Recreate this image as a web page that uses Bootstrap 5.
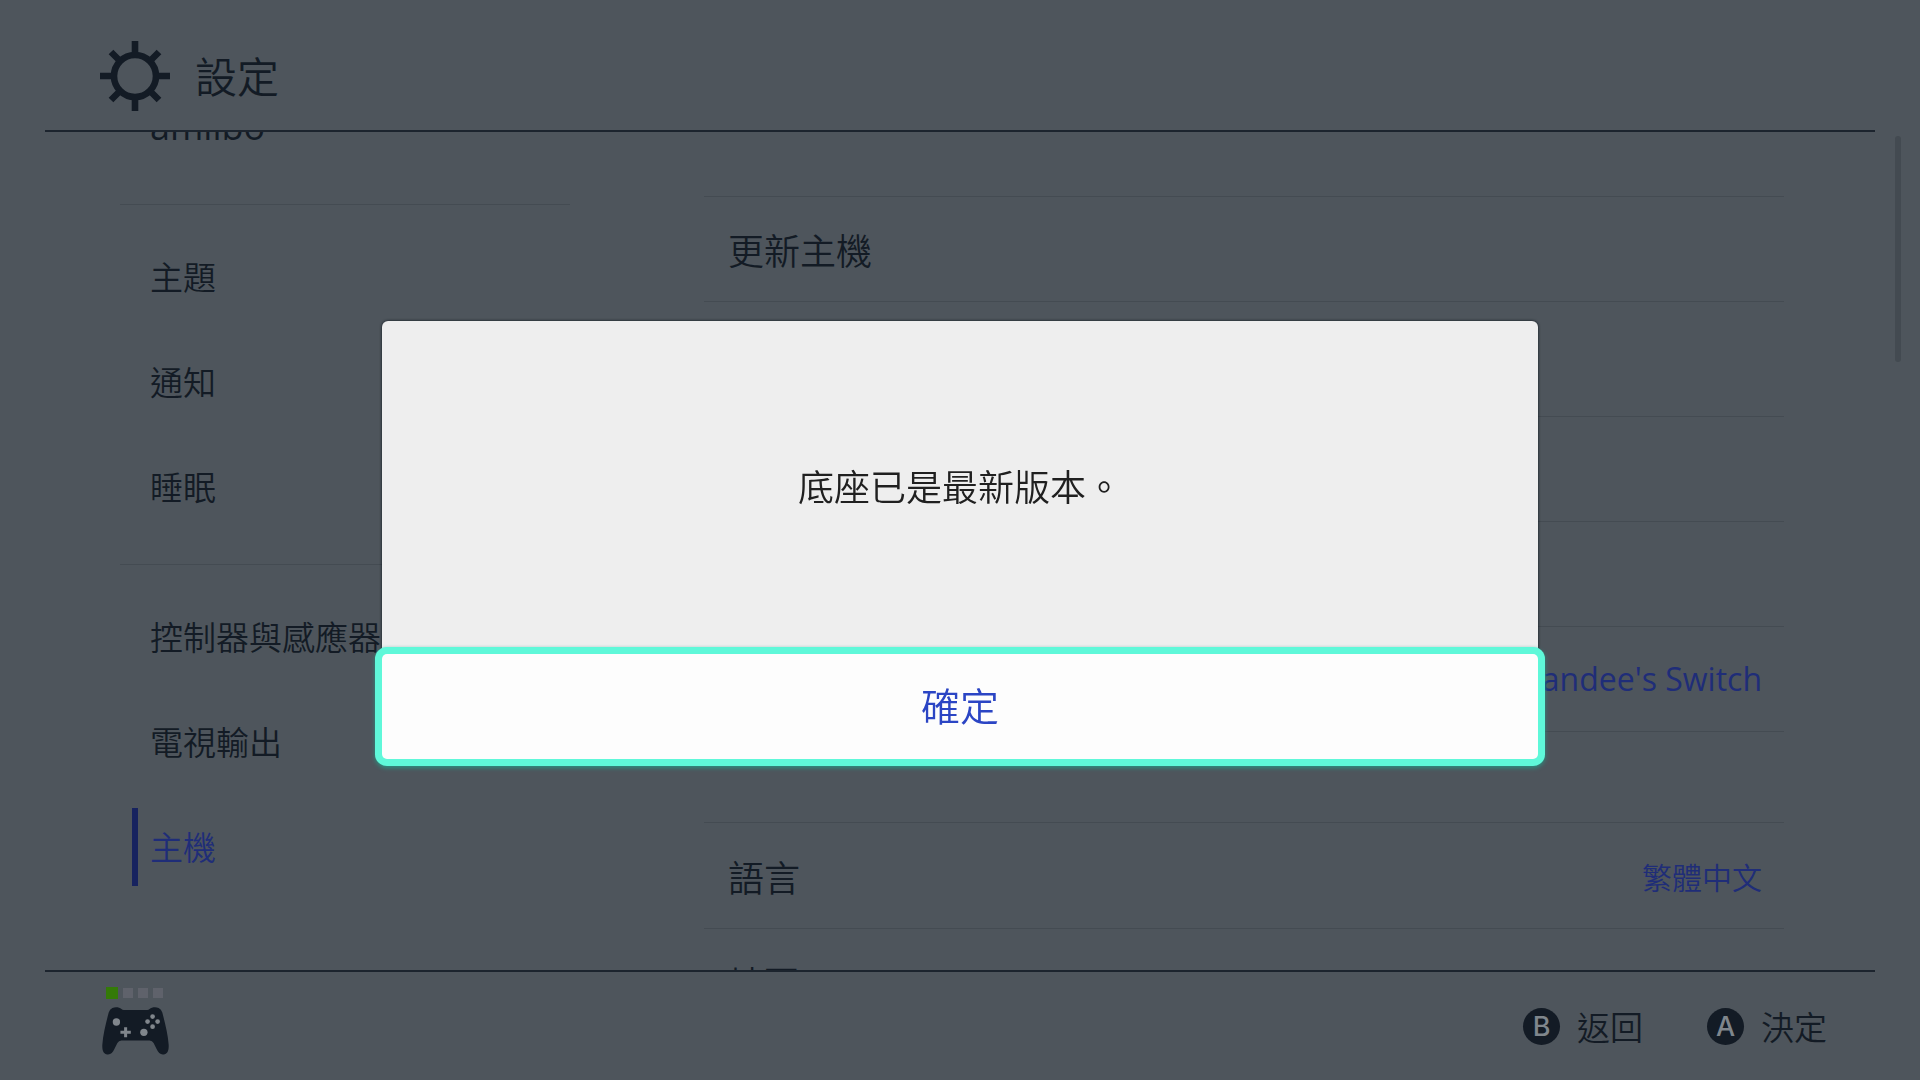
<!DOCTYPE html>
<html lang="zh-Hant">
<head>
<meta charset="utf-8">
<meta name="viewport" content="width=device-width, initial-scale=1">
<title>設定</title>
<link href="https://cdn.jsdelivr.net/npm/bootstrap@5.3.0/dist/css/bootstrap.min.css" rel="stylesheet">
<style>
  :root { --ink: #131b25; --dim: #4e555c; --rule: #444b52; --accent: #1f2d78; --focus: #5ff8d9; }
  body { background: var(--dim); color: var(--ink); font-family: "Noto Sans CJK TC", "Open Sans", sans-serif; font-weight: 350; line-height: 1; }
  .latin { font-family: "Open Sans", "Noto Sans CJK TC", sans-serif; font-weight: 400; }
  .screen-head { height: 132px; margin: 0 45px; padding: 22px 55px 0; border-bottom: 2px solid #1c242e; }
  .screen-title { font-size: 42px; font-weight: 350; line-height: 50px; margin: 0 0 2px 25px; }
  .screen-foot { height: 110px; margin: 0 45px; padding: 0 48px 0 57px; border-top: 2px solid #1c242e; }
  .side-menu { width: 620px; padding: 0 50px 0 120px; }
  /* list scrolled part of the way through its first entry */
  .side-scroll { margin-top: -58px; }
  .side-item { height: 105px; padding-left: 12px; font-size: 33px; color: var(--ink); text-decoration: none; white-space: nowrap; }
  .side-item.latin { font-size: 36px; }
  .side-item::before { content: ""; width: 6px; height: 78px; margin-right: 12px; }
  .side-item.active { color: var(--accent); }
  .side-item.active::before { background: #17235f; }
  .side-rule { margin: 25px 0 19px; border: 0; border-top: 1px solid var(--rule); opacity: 1; }
  .option-pane { padding: 64px 84px 0; }
  .option-group { border-top: 1px solid var(--rule); }
  .option-row { height: 105px; padding: 0 22px 0 24px; border: 0; border-bottom: 1px solid var(--rule); border-radius: 0; background: transparent; color: inherit; font-size: 36px; font-weight: 350; text-align: start; }
  .option-row.tall { height: 115px; }
  .option-group + .option-group { margin-top: 90px; }
  .option-group + .option-group .option-row { height: 106px; }
  .option-value { color: var(--accent); font-size: 30px; }
  .option-value.latin { font-size: 32px; }
  .scroll-track { width: 52px; padding: 4px 0 0 27px; }
  .scroll-thumb { width: 6px; height: 226px; background: #434a51; border-radius: 3px; }
  .pad-status { padding-bottom: 10px; }
  .pad-lights { gap: 5px; }
  .pad-light { width: 10px; height: 10px; background: #5f626b; }
  .pad-light.on { width: 12px; height: 12px; background: #347a08; }
  .hint { border: 0; padding: 0; background: none; color: inherit; font-size: 33px; font-weight: 350; gap: 17px; }
  .hint-key { width: 37px; height: 37px; border-radius: 50%; background: var(--ink); color: #7f868c; font-family: Inter, sans-serif; font-size: 27px; font-weight: 500; }
  .hint-bar { gap: 64px; }
  .dialog-frame { --bs-modal-width: 1156px; }
  .dialog-box { border: 0; border-radius: 6px; background: #eeeeee; box-shadow: 0 0 3px #0b1119; color: #202020; }
  .dialog-text { height: 333px; padding-bottom: 5px; font-size: 36px; }
  .dialog-ok { height: 105px; padding: 0 0 5px; border: 0; border-radius: 5px; background: #fdfdfd; color: #2b45c4; font-size: 39px; font-weight: 350; box-shadow: 0 0 0 7px var(--focus), 0 2px 4px 7px #2b8f80; }
</style>
<script src="https://cdn.jsdelivr.net/npm/bootstrap@5.3.0/dist/js/bootstrap.bundle.min.js"></script>
</head>
<body class="vh-100 d-flex flex-column overflow-hidden">
  <header class="screen-head d-flex align-items-center flex-shrink-0">
    <svg width="70" height="70" viewBox="-35 -35 70 70" fill="none" stroke="#131b25" stroke-width="6.6" aria-hidden="true">
      <circle r="21"/>
      <path d="M0-22V-35M0 22V35M-22 0H-35M22 0H35M15-15 24-24M15 15 24 24M-15 15-24 24M-15-15-24-24"/>
    </svg>
    <h1 class="screen-title">設定</h1>
  </header>

  <main class="d-flex flex-grow-1 overflow-hidden">
    <nav class="side-menu flex-shrink-0">
      <div class="side-scroll">
        <a class="side-item latin d-flex align-items-center" href="#">amiibo</a>
        <hr class="side-rule">
        <a class="side-item d-flex align-items-center" href="#">主題</a>
        <a class="side-item d-flex align-items-center" href="#">通知</a>
        <a class="side-item d-flex align-items-center" href="#">睡眠</a>
        <hr class="side-rule">
        <a class="side-item d-flex align-items-center" href="#">控制器與感應器</a>
        <a class="side-item d-flex align-items-center" href="#">電視輸出</a>
        <a class="side-item active d-flex align-items-center" href="#" aria-current="page">主機</a>
      </div>
    </nav>
    <section class="option-pane flex-grow-1">
      <div class="option-group">
        <button type="button" class="option-row w-100 d-flex align-items-center">更新主機</button>
        <div class="option-row tall"></div>
        <div class="option-row"></div>
        <div class="option-row"></div>
        <button type="button" class="option-row w-100 d-flex align-items-center justify-content-end"><span class="option-value latin">andee's Switch</span></button>
      </div>
      <div class="option-group">
        <button type="button" class="option-row w-100 d-flex align-items-center justify-content-between"><span>語言</span><span class="option-value">繁體中文</span></button>
        <button type="button" class="option-row w-100 d-flex align-items-center">地區</button>
      </div>
    </section>
    <div class="scroll-track flex-shrink-0"><div class="scroll-thumb"></div></div>
  </main>

  <footer class="screen-foot d-flex align-items-center justify-content-between flex-shrink-0">
    <div class="pad-status d-flex flex-column gap-2">
      <div class="pad-lights d-flex align-items-center ps-1">
        <span class="pad-light on"></span><span class="pad-light"></span><span class="pad-light"></span><span class="pad-light"></span>
      </div>
      <svg width="67" height="48" viewBox="0 0 200 142" aria-hidden="true">
        <path fill="#131b25" d="M31 2C40-1 52 0 58 5Q61 8 65 8H135Q139 8 142 5C148 0 160-1 169 2Q177 5 180 16C188 46 197 82 199 112C200 130 195 140 184 141C174 142 168 136 163 125L154 107Q150 99 142 99H58Q50 99 46 107L37 125C32 136 26 142 16 141C5 140 0 130 1 112C3 82 12 46 20 16Q23 5 31 2Z"/>
        <g fill="#80868c">
          <circle cx="43" cy="44" r="11"/><circle cx="125" cy="75" r="11"/>
          <path d="M66 60h9v10h11v9H75v11h-9V79H55v-9h11z"/>
          <circle cx="151" cy="28" r="7"/><circle cx="151" cy="58" r="7"/><circle cx="136" cy="43" r="7"/><circle cx="166" cy="43" r="7"/>
        </g>
      </svg>
    </div>
    <div class="hint-bar d-flex">
      <button type="button" class="hint d-flex align-items-center"><span class="hint-key d-flex align-items-center justify-content-center">B</span>返回</button>
      <button type="button" class="hint d-flex align-items-center"><span class="hint-key d-flex align-items-center justify-content-center">A</span>決定</button>
    </div>
  </footer>

  <div class="modal show d-block dialog-frame" role="dialog" aria-modal="true" aria-labelledby="dialogText">
    <div class="modal-dialog modal-dialog-centered">
      <div class="modal-content dialog-box">
        <div class="dialog-text d-flex align-items-center justify-content-center" id="dialogText">底座已是最新版本。</div>
        <button type="button" class="dialog-ok w-100">確定</button>
      </div>
    </div>
  </div>
</body>
</html>
